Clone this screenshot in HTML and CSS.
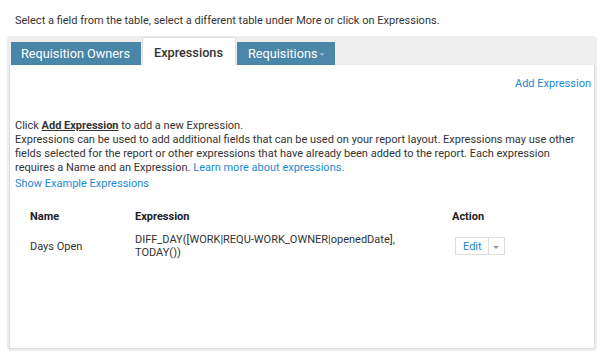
FILE: index.html
```html
<!DOCTYPE html>
<html lang="en">
<head>
  <meta charset="UTF-8" />
  <title>Expressions</title>
  <link rel="stylesheet" href="styles.css">
</head>
<body>

  <p class="hint">Select a field from the table, select a different table under More or click on Expressions.</p>

  <div class="panel">
    <ul class="tabs">
      <li class="tab">Requisition Owners</li>
      <li class="tab active">Expressions</li>
      <li class="tab">Requisitions<span class="caret"></span></li>
    </ul>

    <div class="content">
      <div class="toolbar">
        <a href="#" class="link">Add Expression</a>
      </div>

      <div class="intro">
        Click <a href="#" class="strong-link">Add Expression</a> to add a new Expression.<br>
        Expressions can be used to add additional fields that can be used on your report layout. Expressions may use other
        fields selected for the report or other expressions that have already been added to the report. Each expression
        requires a Name and an Expression. <a href="#" class="link">Learn more about expressions.</a>
        <a href="#" class="link example">Show Example Expressions</a>
      </div>

      <table class="grid">
        <thead>
          <tr>
            <th class="col-name">Name</th>
            <th class="col-expr">Expression</th>
            <th>Action</th>
          </tr>
        </thead>
        <tbody>
          <tr>
            <td>Days Open</td>
            <td>DIFF_DAY([WORK|REQU-WORK_OWNER|openedDate],<br>TODAY())</td>
            <td>
              <span class="btn-group">
                <span class="btn">Edit</span><span class="btn drop"><span class="caret grey"></span></span>
              </span>
            </td>
          </tr>
        </tbody>
      </table>
    </div>
  </div>

</body>
</html>
```

FILE: styles.css
```css
/* Base */
body {
  margin: 0;
  background-color: #fff;
  font-family: Roboto, 'Liberation Sans', Arial, sans-serif;
  font-size: 11px;
  color: #333;
}

.hint {
  margin: 0;
  padding: 14px 0 0 15px;
  line-height: 14px;
  height: 22px;
}

/* Panel with tabs */
.panel {
  margin: 0 9px 0 7px;
  padding: 1px 2px 2px 2px;
  background-color: #eee;
  border-radius: 4px;
}

.tabs {
  list-style: none;
  margin: 0;
  padding: 0 0 0 2px;
  display: flex;
  align-items: flex-end;
  height: 28px;
}

.tab {
  height: 23px;
  line-height: 23px;
  margin-right: 1px;
  background-color: #4a86a8;
  color: #fff;
  font-size: 12.7px;
  white-space: nowrap;
  box-sizing: border-box;
}

.tab:first-child {
  width: 130px;
  padding-left: 10px;
}

.tab.active {
  height: 28px;
  line-height: 29px;
  width: 94px;
  padding-left: 11px;
  background-color: #fff;
  color: #333;
  font-weight: 500;
  border: 1px solid #ddd;
  border-bottom: none;
}

.tab:last-child {
  width: 98px;
  padding-left: 11px;
}

.caret {
  display: inline-block;
  width: 0;
  height: 0;
  margin-left: 1px;
  vertical-align: middle;
  border-left: 3px solid transparent;
  border-right: 3px solid transparent;
  border-top: 3px solid #8fb3c8;
}

.caret.grey {
  border-top-color: #999;
  margin: 0;
}

/* Content box */
.content {
  background-color: #fff;
  border: 1px solid #ddd;
  border-top: none;
  height: 283px;
  padding: 0 3px 0 5px;
}

.toolbar {
  text-align: right;
  padding-top: 12px;
  height: 42px;
}

.link {
  color: #1a8ad2;
  text-decoration: none;
}

.intro {
  line-height: 14px;
}

.example {
  display: block;
  margin-top: 2px;
}

.strong-link {
  color: #333;
  font-weight: 700;
  text-decoration: underline;
}

/* Table */
.grid {
  border-collapse: collapse;
  margin: 13px 0 0 10px;
}

.grid th {
  text-align: left;
  font-weight: 700;
  color: #222;
  padding: 6px 0 6px 5px;
}

.grid td {
  padding: 4px 0 4px 5px;
  vertical-align: middle;
  line-height: 13px;
}

.col-name {
  width: 100px;
}

.col-expr {
  width: 312px;
}

.btn-group {
  display: inline-flex;
  margin-left: 3px;
}

.btn {
  display: inline-block;
  height: 18px;
  line-height: 17px;
  padding: 0 6px 0 7px;
  color: #1a8ad2;
  border: 1px solid #ddd;
  box-sizing: border-box;
}

.btn.drop {
  width: 16px;
  padding: 0;
  text-align: center;
  border-left: none;
}
```
